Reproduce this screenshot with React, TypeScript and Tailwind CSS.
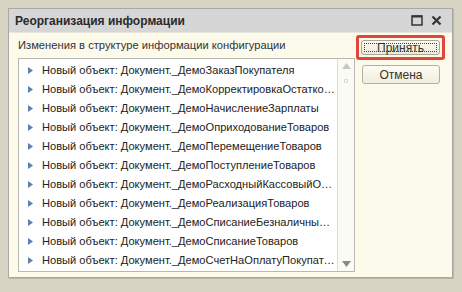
import React from "react";

const rows = [
  "Новый объект: Документ._ДемоЗаказПокупателя",
  "Новый объект: Документ._ДемоКорректировкаОстатковТоваров",
  "Новый объект: Документ._ДемоНачислениеЗарплаты",
  "Новый объект: Документ._ДемоОприходованиеТоваров",
  "Новый объект: Документ._ДемоПеремещениеТоваров",
  "Новый объект: Документ._ДемоПоступлениеТоваров",
  "Новый объект: Документ._ДемоРасходныйКассовыйОрдер",
  "Новый объект: Документ._ДемоРеализацияТоваров",
  "Новый объект: Документ._ДемоСписаниеБезналичныхДенежныхСредств",
  "Новый объект: Документ._ДемоСписаниеТоваров",
  "Новый объект: Документ._ДемоСчетНаОплатуПокупателю",
];

export default function App() {
  return (
    <div
      className="w-[462px] h-[292px] bg-[#d7d4c4] pt-[8px] pl-[8px]"
      style={{ fontFamily: '"Liberation Sans", Arial, sans-serif' }}
    >
      <div className="w-[445px] h-[270px] flex flex-col border border-[#a8a8a8] shadow-[1px_1px_0_#b8b6aa]">
        {/* title bar */}
        <div className="h-[23px] bg-[#d6d6d6] flex items-center pl-[6px] pr-[10px] shrink-0">
          <span className="text-[12px] font-bold text-[#2a2a2a] leading-none">
            Реорганизация информации
          </span>
          <div className="ml-auto flex items-center gap-[8px]">
            <svg width="12" height="11" viewBox="0 0 12 11">
              <rect x="1" y="1" width="10" height="9" fill="none" stroke="#333" strokeWidth="1.5" />
              <line x1="1" y1="1.5" x2="11" y2="1.5" stroke="#333" strokeWidth="2" />
            </svg>
            <svg width="11" height="11" viewBox="0 0 11 11">
              <path d="M1.5 1.5 L9.5 9.5 M9.5 1.5 L1.5 9.5" stroke="#333" strokeWidth="2.2" />
            </svg>
          </div>
        </div>
        {/* body */}
        <div className="flex-1 bg-[#fbfaeb] border-t border-[#e8e6da] flex pl-[9px]">
          <div className="flex flex-col">
            <div className="h-[25px] pt-[4px] text-[11.2px] text-[#333] leading-[16px]">
              Изменения в структуре информации конфигурации
            </div>
            <div className="w-[337px] h-[214px] bg-white border border-[#b8b8b0] flex">
              <div className="flex-1 pt-[2px] overflow-hidden">
                {rows.map((r) => (
                  <div key={r} className="h-[19px] flex items-center">
                    <svg width="5" height="7" viewBox="0 0 5 7" className="ml-[9px] mr-[9px] shrink-0">
                      <path d="M0 0 L5 3.5 L0 7 Z" fill="#5f7fae" />
                    </svg>
                    <span className="truncate text-[11.1px] text-[#222] leading-none pr-[2px]">{r}</span>
                  </div>
                ))}
              </div>
              <div className="w-[17px] border-l border-[#dcdcd4] bg-[#fbfbf6] flex flex-col items-center justify-between py-[4px]">
                <div className="flex flex-col items-center gap-[10px]">
                  <svg width="9" height="6" viewBox="0 0 9 6"><path d="M0 6 L4.5 0 L9 6 Z" fill="#c8c8c0" /></svg>
                  <div className="w-[4px] h-[4px] border border-[#d8d8d0] rounded-[1px]" />
                </div>
                <svg width="9" height="6" viewBox="0 0 9 6"><path d="M0 0 L4.5 6 L9 0 Z" fill="#8a8a88" /></svg>
              </div>
            </div>
          </div>
          <div className="flex flex-col ml-[1px] pt-[2px] gap-[5px]">
            <div className="w-[89px] h-[25px] border-[3px] border-[#e2453a] rounded-[3px] p-[2px] flex">
              <div className="flex-1 rounded-[3px] border border-[#a9a796] bg-gradient-to-b from-[#fcfbf2] to-[#ecead8] p-[2px] flex">
                <div className="flex-1 border border-dotted border-[#444] flex items-center justify-center text-[12px] text-[#333] leading-none">
                  Принять
                </div>
              </div>
            </div>
            <div className="ml-[6px] w-[78px] h-[19px] rounded-[3px] border border-[#b2b0a0] bg-gradient-to-b from-[#fdfcf4] to-[#efeddc] flex items-center justify-center text-[12px] text-[#333] leading-none">
              Отмена
            </div>
          </div>
        </div>
      </div>
    </div>
  );
}
